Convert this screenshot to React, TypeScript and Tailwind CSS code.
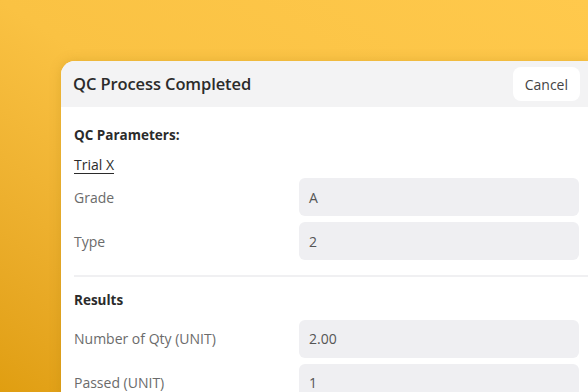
const params = [
  { label: "Grade", value: "A" },
  { label: "Type", value: "2" },
];

const results = [
  { label: "Number of Qty (UNIT)", value: "2.00" },
  { label: "Passed (UNIT)", value: "1" },
];

function Field({ label, value }: { label: string; value: string }) {
  return (
    <div className="flex items-center">
      <span className="w-[225px] text-[14px] text-[#6b6b6b]">{label}</span>
      <div className="flex h-[38px] flex-1 items-center rounded-[6px] bg-[#efeff2] px-[10px] text-[14px] text-[#555]">
        {value}
      </div>
    </div>
  );
}

export default function App() {
  return (
    <div
      className="h-[392px] w-[588px] overflow-hidden bg-gradient-to-bl from-[#ffc94c] via-[#fac243] to-[#e09e10] pl-[61px] pt-[61px]"
      style={{ fontFamily: '"Open Sans", "Noto Sans", sans-serif' }}
    >
      <div className="w-[531px] overflow-hidden rounded-tl-[14px] bg-white shadow-[0_0_12px_rgba(160,110,0,0.25)]">
        <div className="flex h-[46px] items-center justify-between bg-[#f3f3f4] pl-[12px] pr-[12px]">
          <h1 className="text-[16.5px] font-semibold tracking-[-0.1px] text-[#2b2b2b]">QC Process Completed</h1>
          <button className="h-[34px] rounded-[8px] bg-white px-[12px] text-[14px] text-[#444]">Cancel</button>
        </div>
        <div className="px-[13px] pt-[18px]">
          <h2 className="text-[13.5px] font-bold text-[#2b2b2b]">QC Parameters:</h2>
          <p className="mt-[9px] text-[14px] text-[#2b2b2b] underline underline-offset-[3px]">Trial X</p>
          <div className="mt-[3px] flex flex-col gap-[6px]">
            {params.map((p) => (
              <Field key={p.label} {...p} />
            ))}
          </div>
          <div className="mr-[-13px] mt-[15px] h-[2px] bg-[#f0f0f2]" />
          <h2 className="mt-[13px] text-[13.5px] font-bold text-[#2b2b2b]">Results</h2>
          <div className="mt-[9px] flex flex-col gap-[6px]">
            {results.map((p) => (
              <Field key={p.label} {...p} />
            ))}
          </div>
        </div>
      </div>
    </div>
  );
}
